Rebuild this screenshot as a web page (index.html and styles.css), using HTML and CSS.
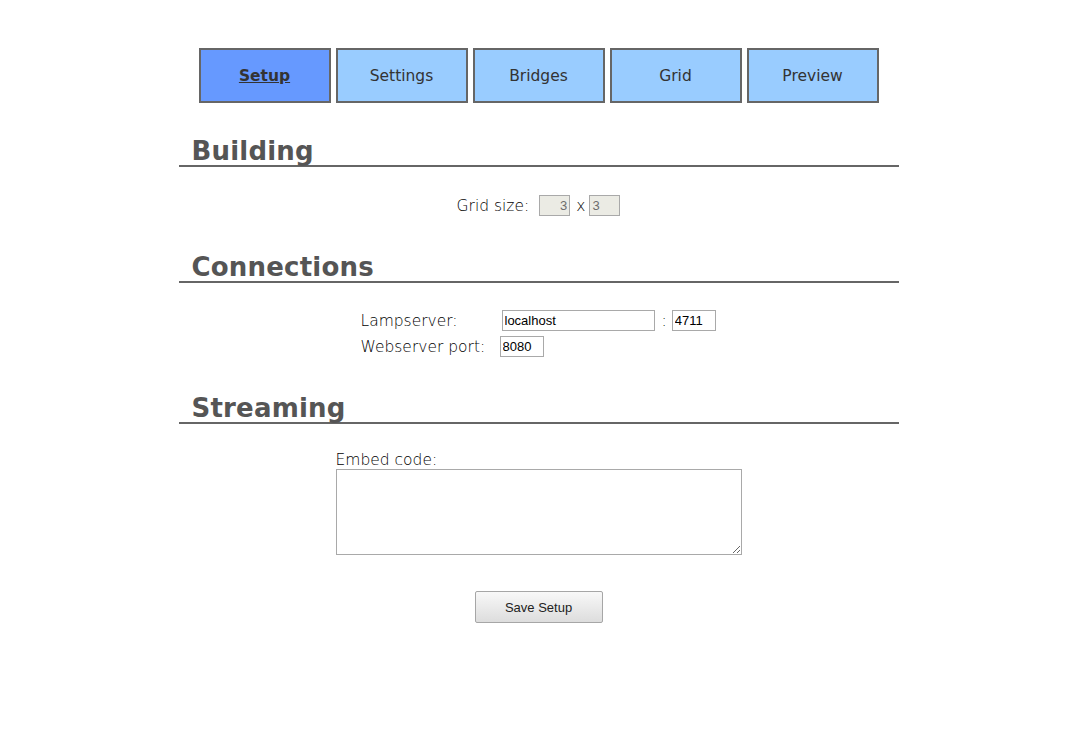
FILE: index.html
```html
<!DOCTYPE html>
<html>
<head>
<meta charset="utf-8">
<title>Setup</title>
<link rel="stylesheet" href="styles.css">
</head>
<body>
<div class="page">
  <nav class="tabs">
    <a class="tab active" href="#">Setup</a>
    <a class="tab" href="#">Settings</a>
    <a class="tab" href="#">Bridges</a>
    <a class="tab" href="#">Grid</a>
    <a class="tab" href="#">Preview</a>
  </nav>

  <h2 class="section-title">Building</h2>
  <div class="grid-row">
    <span class="label">Grid size:</span>
    <input class="field small num-right" type="text" value="3" disabled>
    <span class="label x">x</span>
    <input class="field small" type="text" value="3" disabled>
  </div>

  <h2 class="section-title">Connections</h2>
  <div class="conn">
    <span class="label">Lampserver:</span>
    <div class="cell first">
      <input class="field host" type="text" value="localhost">
      <span class="label colon">:</span>
      <input class="field port" type="text" value="4711">
    </div>
    <span class="label">Webserver port:</span>
    <div class="cell">
      <input class="field port" type="text" value="8080">
    </div>
  </div>

  <h2 class="section-title">Streaming</h2>
  <div class="embed">
    <div class="label">Embed code:</div>
    <textarea class="embed-area"></textarea>
  </div>

  <div class="actions">
    <button class="save" type="button">Save Setup</button>
  </div>
</div>
</body>
</html>
```
FILE: styles.css
```css
body {
  margin: 0;
  background: #fff;
  font-family: "DejaVu Sans", sans-serif;
  color: #222;
}
.page {
  width: 720px;
  margin: 0 auto;
}
.tabs {
  display: flex;
  justify-content: center;
  gap: 5px;
  margin-top: 48px;
}
.tab {
  box-sizing: border-box;
  width: 132px;
  height: 55px;
  border: 2px solid #666;
  background: #99ccff;
  color: #333;
  font-size: 15.5px;
  display: flex;
  align-items: center;
  justify-content: center;
  text-decoration: none;
}
.tab.active {
  background: #6699ff;
  font-weight: bold;
  text-decoration: underline;
}
.section-title {
  margin: 34px 0 0 0;
  padding-left: 13px;
  font-size: 26px;
  line-height: 28px;
  letter-spacing: 0.2px;
  font-weight: bold;
  color: #555;
  border-bottom: 2px solid #666;
}
.label {
  font-size: 15.5px;
  font-weight: 200;
  color: #000;
}
.field {
  box-sizing: border-box;
  height: 21px;
  border: 1px solid #a9a9a9;
  padding: 1px 2px;
  font-family: "Liberation Sans", Arial, sans-serif;
  font-size: 13px;
  color: #000;
  background: #fff;
  margin: 0;
}
.field:disabled {
  background: #ebebe4;
  color: #6d6d6d;
}
.grid-row {
  display: flex;
  justify-content: center;
  align-items: center;
  margin-top: 28px;
  height: 21px;
}
.grid-row .label:first-child {
  margin-right: 10px;
}
.small {
  width: 31px;
}
.num-right {
  text-align: right;
}
.x {
  margin: 0 4px 0 6px;
}
.conn {
  display: grid;
  grid-template-columns: 139px auto;
  row-gap: 5px;
  width: 356px;
  margin: 27px auto 0 auto;
  align-items: center;
}
.cell {
  display: flex;
  align-items: center;
}
.cell.first {
  padding-left: 2px;
}
.host {
  width: 153px;
}
.port {
  width: 44px;
}
.colon {
  margin: 0 5px 0 7px;
}
.section-title + .conn + .section-title,
.grid-row + .section-title {
  margin-top: 37px;
}
.embed {
  width: 406px;
  margin: 27px auto 0 auto;
}
.embed .label {
  line-height: 18px;
}
.embed-area {
  display: block;
  box-sizing: border-box;
  width: 406px;
  height: 86px;
  border: 1px solid #a9a9a9;
  margin: 0;
  resize: both;
}
.actions {
  display: flex;
  justify-content: center;
  margin-top: 36px;
}
.save {
  box-sizing: border-box;
  width: 128px;
  height: 32px;
  border: 1px solid #a6a6a6;
  border-radius: 2px;
  background: linear-gradient(#f8f8f8, #dddddd);
  font-family: "Liberation Sans", Arial, sans-serif;
  font-size: 13px;
  color: #222;
}
```
